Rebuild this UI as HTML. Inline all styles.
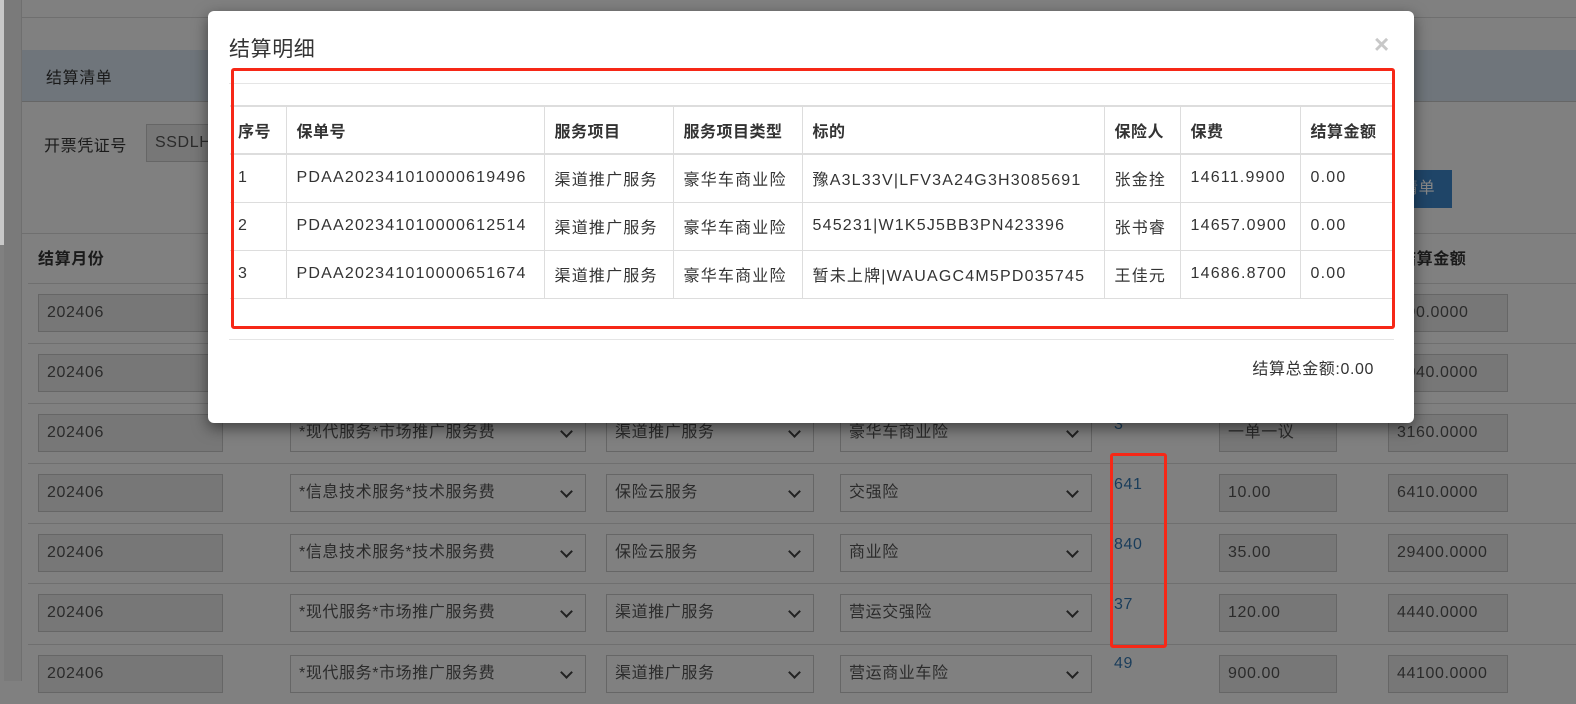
<!DOCTYPE html>
<html style="background:#808080"><head><meta charset="utf-8"><style>
*{box-sizing:border-box;margin:0;padding:0}
html,body{background-color:#808080}
body{width:1576px;height:681px;overflow:hidden;position:relative;font-family:"Liberation Sans","Noto Sans CJK SC",sans-serif;font-size:16px;color:#1a1a1a;letter-spacing:0.6px}
.a{position:absolute}
.inp{position:absolute;height:38px;background-color:#777777;border:1px solid #666666;padding:0 8px;line-height:36px;color:#2b2b2b;font-size:16px;white-space:nowrap;overflow:hidden}
.sel{background-color:#808080}
.sel:after{content:"";position:absolute;right:14px;top:12px;width:7px;height:7px;border-right:2px solid #222;border-bottom:2px solid #222;transform:rotate(45deg)}
.row{position:absolute;left:28px;width:1548px;height:60px;border-top:1px solid #6f6f6f}
.lnk{position:absolute;color:#1a3d5b;font-size:16px}
#m{position:absolute;left:208px;top:11px;width:1206px;height:412px;background:#fff;border-radius:6px;box-shadow:0 5px 15px rgba(0,0,0,.5)}
table{border-collapse:collapse;position:absolute;left:22px;top:94px;width:1162px;font-size:16px;letter-spacing:1.2px}
td,th{border:1px solid #ddd;padding:0 10px;height:48px;text-align:left;color:#333;white-space:nowrap}
th{border-top:2px solid #ddd;border-bottom:2px solid #ddd;font-weight:bold;letter-spacing:0.5px}
td:first-child,th:first-child{padding:0 0 0 8px;border-left:0}
td:last-child,th:last-child{border-right:0}
.red{position:absolute;border:3px solid #f62817;border-radius:3px}
</style></head><body>
<div class="a" style="left:0;top:0;width:1576px;height:681px;background-color:#808080"></div>
<div class="a" style="left:0;top:0;width:4px;height:245px;background-color:#c8c8c8"></div>
<div class="a" style="left:4px;top:0;width:18px;height:681px;background-color:#7a7a7a;border-right:1px solid #6f6f6f"></div>
<div class="a" style="left:22px;top:0;width:1554px;height:18px;border-bottom:1px solid #6f6f6f"></div>
<div class="a" style="left:22px;top:50px;width:1554px;height:52px;background-color:#6f757b;border-bottom:1px solid #666"></div>
<div class="a" style="left:46px;top:64px;font-size:16px;color:#1a1a1a">结算清单</div>
<div class="a" style="left:44px;top:132px;font-size:16px;color:#1a1a1a">开票凭证号</div>
<div class="inp" style="left:146px;top:124px;width:200px">SSDLH</div>
<div class="a" style="left:1380px;top:170px;width:72px;height:38px;background-color:#1f4568;color:#888;line-height:38px;padding-left:22px">清单</div>
<div class="a" style="left:22px;top:233px;width:1554px;height:50px;border-top:1px solid #6f6f6f"></div>
<div class="a" style="left:38px;top:245px;font-weight:bold">结算月份</div>
<div class="a" style="left:1400px;top:245px;font-weight:bold">结算金额</div>

<div class="row" style="top:283px"></div>
<div class="inp" style="left:38px;top:294px;width:185px">202406</div>
<div class="inp" style="left:1388px;top:294px;width:120px">290.0000</div>
<div class="row" style="top:343px"></div>
<div class="inp" style="left:38px;top:354px;width:185px">202406</div>
<div class="inp" style="left:1388px;top:354px;width:120px">6040.0000</div>

<div class="row" style="top:403px"></div>
<div class="inp" style="left:38px;top:414px;width:185px">202406</div>
<div class="inp sel" style="left:290px;top:414px;width:296px">*现代服务*市场推广服务费</div>
<div class="inp sel" style="left:606px;top:414px;width:208px">渠道推广服务</div>
<div class="inp sel" style="left:840px;top:414px;width:252px">豪华车商业险</div>
<div class="lnk" style="left:1114px;top:416px">3</div>
<div class="inp" style="left:1219px;top:414px;width:118px">一单一议</div>
<div class="inp" style="left:1388px;top:414px;width:120px">3160.0000</div>

<div class="row" style="top:463px"></div>
<div class="inp" style="left:38px;top:474px;width:185px">202406</div>
<div class="inp sel" style="left:290px;top:474px;width:296px">*信息技术服务*技术服务费</div>
<div class="inp sel" style="left:606px;top:474px;width:208px">保险云服务</div>
<div class="inp sel" style="left:840px;top:474px;width:252px">交强险</div>
<div class="lnk" style="left:1114px;top:476px">641</div>
<div class="inp" style="left:1219px;top:474px;width:118px">10.00</div>
<div class="inp" style="left:1388px;top:474px;width:120px">6410.0000</div>

<div class="row" style="top:523px"></div>
<div class="inp" style="left:38px;top:534px;width:185px">202406</div>
<div class="inp sel" style="left:290px;top:534px;width:296px">*信息技术服务*技术服务费</div>
<div class="inp sel" style="left:606px;top:534px;width:208px">保险云服务</div>
<div class="inp sel" style="left:840px;top:534px;width:252px">商业险</div>
<div class="lnk" style="left:1114px;top:536px">840</div>
<div class="inp" style="left:1219px;top:534px;width:118px">35.00</div>
<div class="inp" style="left:1388px;top:534px;width:120px">29400.0000</div>

<div class="row" style="top:583px"></div>
<div class="inp" style="left:38px;top:594px;width:185px">202406</div>
<div class="inp sel" style="left:290px;top:594px;width:296px">*现代服务*市场推广服务费</div>
<div class="inp sel" style="left:606px;top:594px;width:208px">渠道推广服务</div>
<div class="inp sel" style="left:840px;top:594px;width:252px">营运交强险</div>
<div class="lnk" style="left:1114px;top:596px">37</div>
<div class="inp" style="left:1219px;top:594px;width:118px">120.00</div>
<div class="inp" style="left:1388px;top:594px;width:120px">4440.0000</div>

<div class="row" style="top:644px"></div>
<div class="inp" style="left:38px;top:655px;width:185px">202406</div>
<div class="inp sel" style="left:290px;top:655px;width:296px">*现代服务*市场推广服务费</div>
<div class="inp sel" style="left:606px;top:655px;width:208px">渠道推广服务</div>
<div class="inp sel" style="left:840px;top:655px;width:252px">营运商业车险</div>
<div class="lnk" style="left:1114px;top:655px">49</div>
<div class="inp" style="left:1219px;top:655px;width:118px">900.00</div>
<div class="inp" style="left:1388px;top:655px;width:120px">44100.0000</div>

<div class="red" style="left:1110px;top:453px;width:57px;height:195px"></div>

<div id="m">
<div class="a" style="left:21px;top:22px;font-size:21px;color:#333">结算明细</div>
<div class="a" style="left:1166px;top:18px;font-size:26px;color:#c8c8c8;font-weight:bold">×</div>
<div class="a" style="left:21px;top:72px;width:1165px;border-top:1px solid #e5e5e5"></div>
<table>
<tr><th style="width:56px">序号</th><th style="width:258px">保单号</th><th style="width:129px">服务项目</th><th style="width:129px">服务项目类型</th><th style="width:302px">标的</th><th style="width:76px">保险人</th><th style="width:120px">保费</th><th>结算金额</th></tr>
<tr><td>1</td><td>PDAA202341010000619496</td><td>渠道推广服务</td><td>豪华车商业险</td><td>豫A3L33V|LFV3A24G3H3085691</td><td>张金拴</td><td>14611.9900</td><td>0.00</td></tr>
<tr><td>2</td><td>PDAA202341010000612514</td><td>渠道推广服务</td><td>豪华车商业险</td><td>545231|W1K5J5BB3PN423396</td><td>张书睿</td><td>14657.0900</td><td>0.00</td></tr>
<tr><td>3</td><td>PDAA202341010000651674</td><td>渠道推广服务</td><td>豪华车商业险</td><td>暂未上牌|WAUAGC4M5PD035745</td><td>王佳元</td><td>14686.8700</td><td>0.00</td></tr>
</table>
<div class="a" style="left:21px;top:328px;width:1165px;border-top:1px solid #e5e5e5"></div>
<div class="a" style="right:40px;top:344px;font-size:16px;color:#333">结算总金额:0.00</div>
</div>
<div class="red" style="left:231px;top:68px;width:1164px;height:261px"></div>
</body></html>
